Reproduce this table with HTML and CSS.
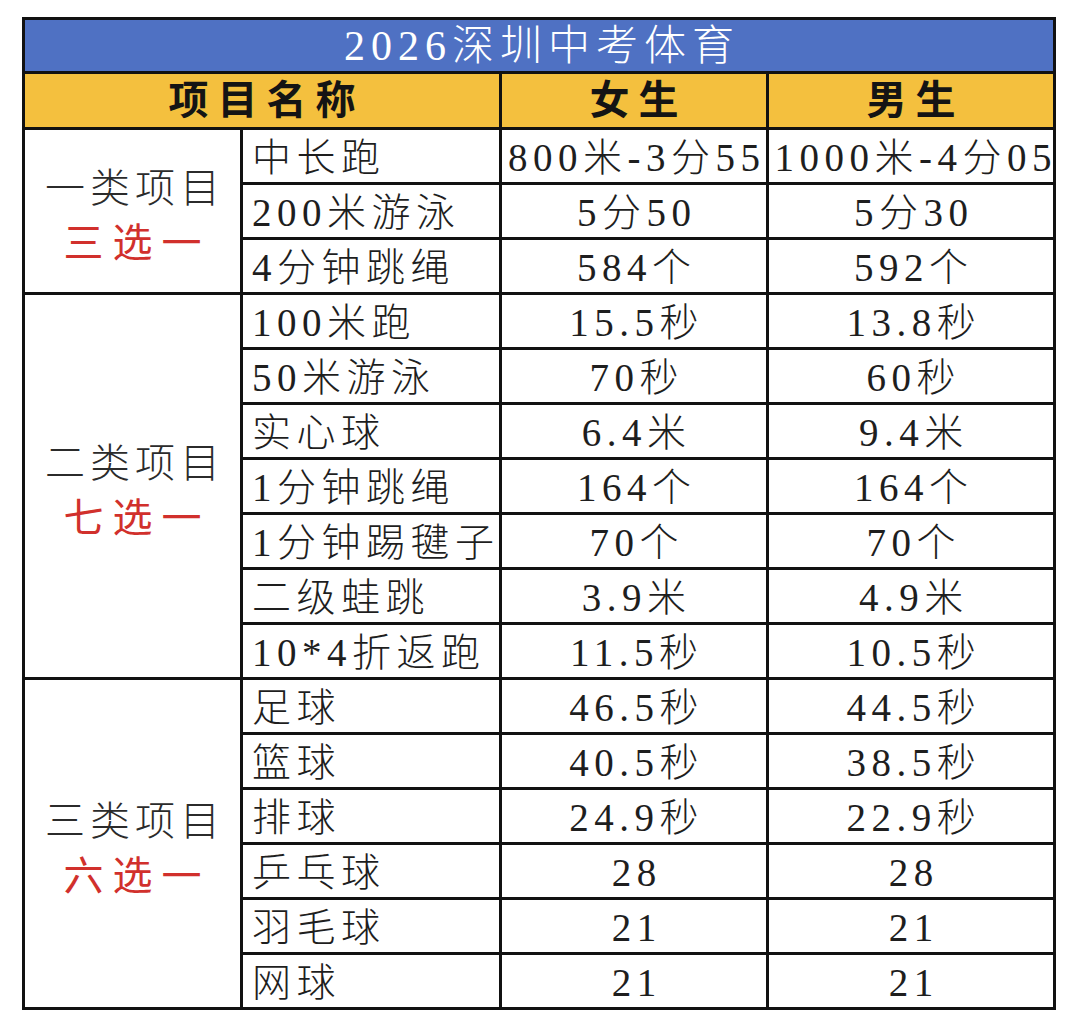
FILE: index.html
```html
<!DOCTYPE html>
<html lang="zh-CN">
<head>
<meta charset="utf-8">
<title>2026深圳中考体育</title>
<link rel="stylesheet" href="styles.css">
</head>
<body>
<table class="sheet">
  <colgroup>
    <col class="c-cat">
    <col class="c-item">
    <col class="c-f">
    <col class="c-m">
  </colgroup>
  <thead>
    <tr class="row-title"><th colspan="4" class="title">2026深圳中考体育</th></tr>
    <tr class="row-head">
      <th colspan="2" class="head">项目名称</th>
      <th class="head">女生</th>
      <th class="head">男生</th>
    </tr>
  </thead>
  <tbody>
    <tr>
      <td rowspan="3" class="cat"><div>一类项目</div><div class="pick">三选一</div></td>
      <td class="item">中长跑</td><td class="val">800米-3分55</td><td class="val">1000米-4分05</td>
    </tr>
    <tr><td class="item">200米游泳</td><td class="val">5分50</td><td class="val">5分30</td></tr>
    <tr><td class="item">4分钟跳绳</td><td class="val">584个</td><td class="val">592个</td></tr>
    <tr>
      <td rowspan="7" class="cat"><div>二类项目</div><div class="pick">七选一</div></td>
      <td class="item">100米跑</td><td class="val">15.5秒</td><td class="val">13.8秒</td>
    </tr>
    <tr><td class="item">50米游泳</td><td class="val">70秒</td><td class="val">60秒</td></tr>
    <tr><td class="item">实心球</td><td class="val">6.4米</td><td class="val">9.4米</td></tr>
    <tr><td class="item">1分钟跳绳</td><td class="val">164个</td><td class="val">164个</td></tr>
    <tr><td class="item">1分钟踢毽子</td><td class="val">70个</td><td class="val">70个</td></tr>
    <tr><td class="item">二级蛙跳</td><td class="val">3.9米</td><td class="val">4.9米</td></tr>
    <tr><td class="item">10*4折返跑</td><td class="val">11.5秒</td><td class="val">10.5秒</td></tr>
    <tr>
      <td rowspan="6" class="cat"><div>三类项目</div><div class="pick">六选一</div></td>
      <td class="item">足球</td><td class="val">46.5秒</td><td class="val">44.5秒</td>
    </tr>
    <tr><td class="item">篮球</td><td class="val">40.5秒</td><td class="val">38.5秒</td></tr>
    <tr><td class="item">排球</td><td class="val">24.9秒</td><td class="val">22.9秒</td></tr>
    <tr><td class="item">乒乓球</td><td class="val">28</td><td class="val">28</td></tr>
    <tr><td class="item">羽毛球</td><td class="val">21</td><td class="val">21</td></tr>
    <tr><td class="item">网球</td><td class="val">21</td><td class="val">21</td></tr>
  </tbody>
</table>
</body>
</html>
```

FILE: styles.css
```css
* { box-sizing: border-box; }

html, body {
  margin: 0;
  background: #ffffff;
}

body {
  padding: 17px 0 0 22px;
  font-family: "Liberation Serif", "Noto Sans CJK SC", serif;
  color: #1e1e1e;
}

.sheet {
  width: 1034px;
  table-layout: fixed;
  border-collapse: separate;
  border-spacing: 0;
  border-top: 3px solid #111;
  border-left: 3px solid #111;
}

.c-cat { width: 218px; }
.c-item { width: 259px; }
.c-f { width: 267px; }
.c-m { width: 287px; }

.sheet th,
.sheet td {
  border-right: 3px solid #111;
  border-bottom: 3px solid #111;
  padding: 0;
  white-space: nowrap;
  overflow: visible;
}

.row-title { height: 54px; }
.row-head { height: 56px; }
.sheet tbody tr { height: 55px; }

.sheet .title {
  background: #4f71c3;
  color: #ffffff;
  font-weight: 300;
  font-size: 42px;
  letter-spacing: 6px;
  text-indent: 6px;
  text-align: center;
  line-height: 49px;
  padding-top: 2px;
}

.sheet .head {
  background: #f4c03e;
  color: #141414;
  font-weight: 600;
  font-size: 40px;
  letter-spacing: 9px;
  text-indent: 9px;
  text-align: center;
  line-height: 52px;
}

.sheet .cat {
  text-align: center;
  vertical-align: middle;
  font-size: 40px;
  font-weight: 300;
  letter-spacing: 5px;
  text-indent: 5px;
  line-height: 55px;
  color: #2b2b2b;
  padding-top: 10px;
}

.sheet .pick {
  color: #d1302c;
  font-weight: 400;
  letter-spacing: 9px;
  text-indent: 9px;
}

.sheet .item {
  text-align: left;
  padding: 4px 0 0 9px;
  font-size: 39px;
  font-weight: 300;
  letter-spacing: 5.5px;
  line-height: 48px;
}

.sheet .val {
  text-align: center;
  padding-top: 4px;
  font-size: 39px;
  font-weight: 300;
  letter-spacing: 5.5px;
  text-indent: 5.5px;
  line-height: 48px;
}
```
